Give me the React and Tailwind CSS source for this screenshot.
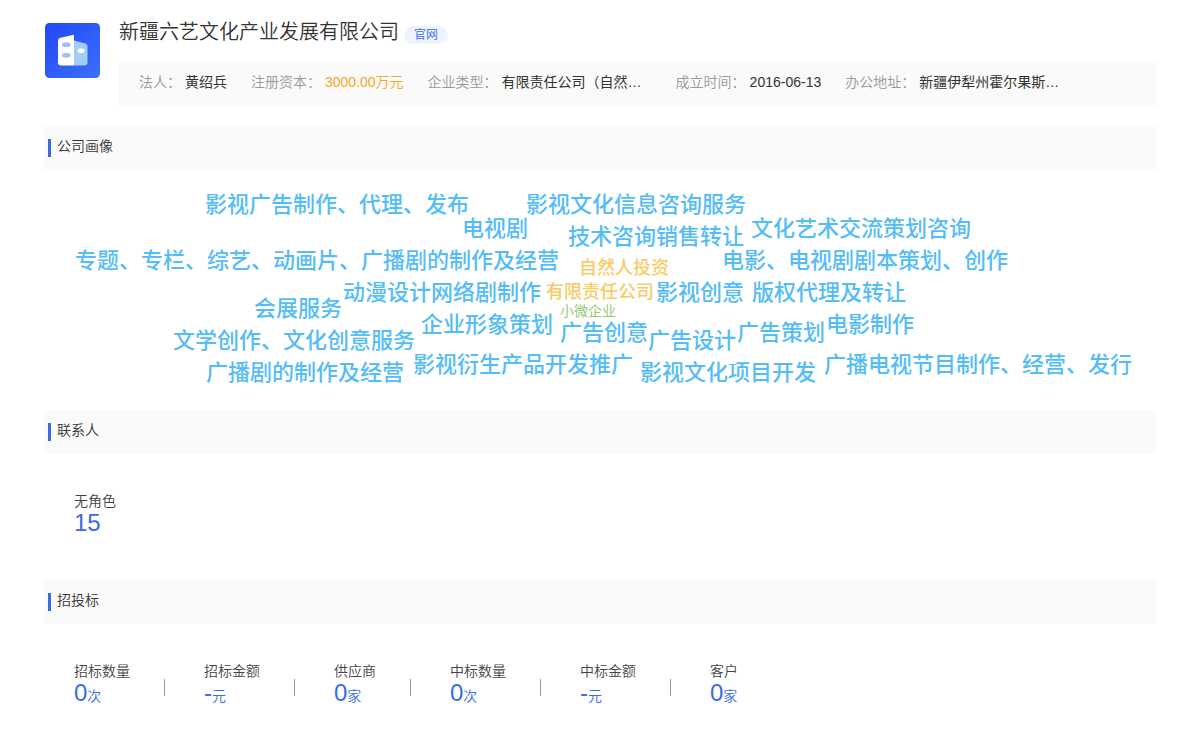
import React from "react";

const empresa = {
  nome: "新疆六艺文化产业发展有限公司",
  dados: [
    { label: "法人：", value: "黄绍兵" },
    { label: "注册资本：", value: "3000.00万元", destaque: true },
    { label: "企业类型：", value: "有限责任公司（自然…", largo: true },
    { label: "成立时间：", value: "2016-06-13" },
    { label: "办公地址：", value: "新疆伊犁州霍尔果斯…", largo: true },
  ],
};

// x is measured from the middle of the cloud, y from its top
const palavras = [
  { text: "影视广告制作、代理、发布", x: -395, y: 19 },
  { text: "影视文化信息咨询服务", x: -74, y: 19 },
  { text: "电视剧", x: -138, y: 43 },
  { text: "技术咨询销售转让", x: -32, y: 51 },
  { text: "文化艺术交流策划咨询", x: 151, y: 43 },
  { text: "专题、专栏、综艺、动画片、广播剧的制作及经营", x: -525, y: 75 },
  { text: "自然人投资", x: -21, y: 82, tipo: "medio" },
  { text: "电影、电视剧剧本策划、创作", x: 122, y: 75 },
  { text: "动漫设计网络剧制作", x: -257, y: 107 },
  { text: "有限责任公司", x: -54, y: 106, tipo: "medio" },
  { text: "影视创意", x: 56, y: 107 },
  { text: "版权代理及转让", x: 152, y: 107 },
  { text: "会展服务", x: -346, y: 123 },
  { text: "小微企业", x: -40, y: 125, tipo: "pequeno" },
  { text: "企业形象策划", x: -179, y: 139 },
  { text: "广告创意", x: -40, y: 147 },
  { text: "文学创作、文化创意服务", x: -427, y: 155 },
  { text: "广告设计", x: 48, y: 155 },
  { text: "广告策划", x: 137, y: 147 },
  { text: "电影制作", x: 226, y: 139 },
  { text: "广播剧的制作及经营", x: -394, y: 187 },
  { text: "影视衍生产品开发推广", x: -187, y: 179 },
  { text: "影视文化项目开发", x: 40, y: 187 },
  { text: "广播电视节目制作、经营、发行", x: 224, y: 179 },
];

const estilos = {
  grande: "text-[22px] font-medium text-[#54bdf8]",
  medio: "text-[18px] font-medium text-[#f8cc66]",
  pequeno: "text-sm text-[#91cc75]",
};

const licitacoes = [
  { label: "招标数量", value: "0", unidade: "次" },
  { label: "招标金额", value: "-", unidade: "元" },
  { label: "供应商", value: "0", unidade: "家" },
  { label: "中标数量", value: "0", unidade: "次" },
  { label: "中标金额", value: "-", unidade: "元" },
  { label: "客户", value: "0", unidade: "家" },
];

function Logo() {
  return (
    <svg className="h-[55px] w-[55px] shrink-0" viewBox="0 0 55 55" aria-hidden="true">
      <defs>
        <linearGradient id="fundo" x1="0" y1="0" x2="1" y2="1">
          <stop offset="0" stopColor="#2347f8" />
          <stop offset="1" stopColor="#3b70fb" />
        </linearGradient>
      </defs>
      <rect width="55" height="55" rx="4.5" fill="url(#fundo)" />
      <path d="M29 17.5 40.5 20.5Q42.5 21 42.5 23V39.5Q42.5 42.5 39.5 42.5H29Z" fill="#a3ccfb" />
      <path d="M15.5 14.8 29 11.8V42.5H16Q13 42.5 13 39.5V18Q13 15.4 15.5 14.8Z" fill="#fff" />
      <rect x="17" y="19.5" width="8.5" height="4.5" rx="2.2" fill="#9fc0f6" />
      <rect x="17" y="30" width="8.5" height="4.5" rx="2.2" fill="#9fc0f6" />
      <rect x="32.5" y="25.5" width="7" height="4.5" rx="2.2" fill="#fff" />
    </svg>
  );
}

function Titulo({ children }) {
  return (
    <div className="flex h-11 gap-1.5 bg-[#fafafa] pl-1">
      <span className="mt-[13px] h-[18px] w-[3px] bg-[#3a6ae8]" />
      <h2 className="pt-2.5 text-sm leading-5 font-[350] text-[#333]">{children}</h2>
    </div>
  );
}

function Indicador({ label, value, unidade }) {
  return (
    <div className="font-[350]">
      <div className="text-sm leading-5 text-[#444]">{label}</div>
      <div className="text-2xl leading-6 text-[#3a6ae8]">
        {value}
        {unidade && <span className="text-sm leading-6">{unidade}</span>}
      </div>
    </div>
  );
}

export default function App() {
  return (
    <div className="min-h-screen bg-white px-11 pt-5 font-['Liberation_Sans','Noto_Sans_CJK_SC',sans-serif] text-[#333]">
      {/* Company header */}
      <header className="flex gap-[19px] pl-px">
        <div className="pt-[3px]">
          <Logo />
        </div>
        <div className="min-w-0 flex-1">
          <div className="flex h-[42px] items-start gap-[5px]">
            <h1 className="text-xl leading-6 font-[350]">{empresa.nome}</h1>
            <a href="#" className="mt-1.5 rounded-full bg-[#eef4fe] px-2.5 text-xs leading-[18px] font-[350] text-[#3a6ae8]">
              官网
            </a>
          </div>
          <dl className="flex h-11 gap-6 bg-[#fafafa] px-5 pt-2.5 text-sm leading-5">
            {empresa.dados.map((d) => (
              <div key={d.label} className="flex shrink-0 gap-1">
                <dt className="font-[350] text-[#999]">{d.label}</dt>
                <dd className={d.largo ? "w-[150px]" : d.destaque ? "font-[350] text-[#f5a623]" : ""}>
                  {d.value}
                </dd>
              </div>
            ))}
          </dl>
        </div>
      </header>

      <section className="mt-5">
        <Titulo>公司画像</Titulo>
        <div className="relative h-60 overflow-hidden">
          {palavras.map((p) => (
            <span
              key={p.text}
              className={`absolute leading-8 whitespace-nowrap ${estilos[p.tipo || "grande"]}`}
              style={{ left: `calc(50% + ${p.x}px)`, top: p.y }}
            >
              {p.text}
            </span>
          ))}
        </div>
      </section>

      <section>
        <Titulo>联系人</Titulo>
        <div className="px-[30px] pt-[37px] pb-[45px]">
          <Indicador label="无角色" value="15" />
        </div>
      </section>

      <section>
        <Titulo>招投标</Titulo>
        <div className="flex px-[30px] pt-[37px]">
          {licitacoes.map((l, i) => (
            <React.Fragment key={l.label}>
              {i > 0 && <span className="mt-[18px] mr-[39px] ml-[34px] h-[17px] w-px bg-[#999]" />}
              <Indicador {...l} />
            </React.Fragment>
          ))}
        </div>
      </section>
    </div>
  );
}
